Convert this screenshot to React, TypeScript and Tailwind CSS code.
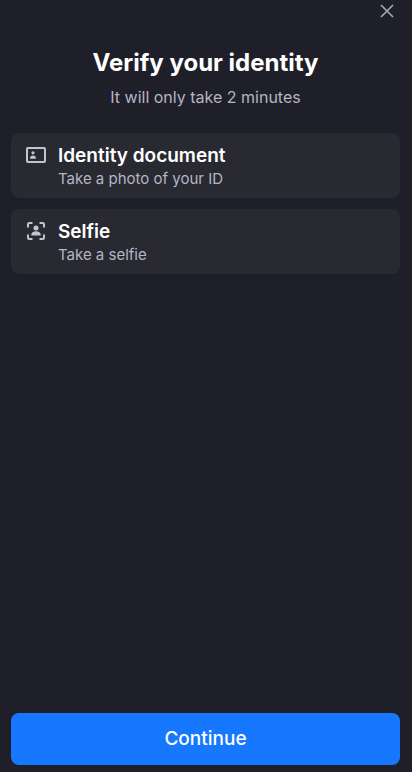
import type { ReactNode } from "react";

interface Step {
  title: string;
  description: string;
  icon: ReactNode;
}

function DocumentIcon() {
  return (
    <svg width="20" height="20" viewBox="0 0 20 20" fill="none" aria-hidden="true">
      <rect x="1" y="3" width="18" height="14" rx="1" stroke="currentColor" strokeWidth="2" />
      <circle cx="7" cy="7.8" r="1.6" fill="currentColor" />
      <path d="M4 13.800c0-2.100 1.200-3.200 3-3.200s3 1.100 3 3.200z" fill="currentColor" />
    </svg>
  );
}

function SelfieIcon() {
  return (
    <svg width="20" height="20" viewBox="0 0 20 20" fill="none" aria-hidden="true">
      <path
        d="M2 6.500V3.500C2 2.600 2.600 2 3.500 2H6.500M13.500 2h3c.9 0 1.500.6 1.500 1.500v3M18 13.500v3c0 .9-.6 1.500-1.500 1.500h-3M6.500 18h-3C2.600 18 2 17.400 2 16.500v-3"
        stroke="currentColor"
        strokeWidth="2"
      />
      <circle cx="10" cy="7" r="2.500" fill="currentColor" />
      <path d="M5.200 14.500c0-2.900 2-4.200 4.800-4.200s4.800 1.300 4.800 4.200z" fill="currentColor" />
    </svg>
  );
}

const steps: Step[] = [
  {
    title: "Identity document",
    description: "Take a photo of your ID",
    icon: <DocumentIcon />,
  },
  {
    title: "Selfie",
    description: "Take a selfie",
    icon: <SelfieIcon />,
  },
];

export default function App() {
  return (
    <div className="flex min-h-screen flex-col bg-[#1f1f2a] pr-3 pb-[7px] pl-[11px] font-[Inter,sans-serif]">
      <header className="flex justify-end pt-[3px] pr-[5px]">
        <button type="button" aria-label="Close" className="text-[#a9a9b5]">
          <svg width="16" height="16" viewBox="0 0 16 16" fill="none" aria-hidden="true">
            <path d="M2 2l12 12M14 2L2 14" stroke="currentColor" strokeWidth="1.600" />
          </svg>
        </button>
      </header>

      <main className="flex flex-1 flex-col">
        <div className="mt-7 text-center">
          <h1 className="text-2xl leading-8 font-bold text-white">
            Verify your identity
          </h1>
          <p className="mt-[6px] text-base leading-6 text-[#b5b5c3]">
            It will only take 2 minutes
          </p>
        </div>

        <ul className="mt-6 flex flex-col gap-[11px]">
          {steps.map((step) => (
            <li
              key={step.title}
              className="flex gap-3 rounded-lg bg-[#292932] px-[15px] pt-[11px] pb-2"
            >
              <span className="mt-px text-[#c4c4d0]">{step.icon}</span>
              <div>
                <h2 className="text-[19px] leading-6 font-semibold text-white">
                  {step.title}
                </h2>
                <p className="text-[15px] leading-[22px] text-[#b5b5c3]">
                  {step.description}
                </p>
              </div>
            </li>
          ))}
        </ul>
      </main>

      <button
        type="button"
        className="h-[52px] w-full rounded-lg bg-[#1677ff] text-[19px] font-medium text-white"
      >
        Continue
      </button>
    </div>
  );
}
